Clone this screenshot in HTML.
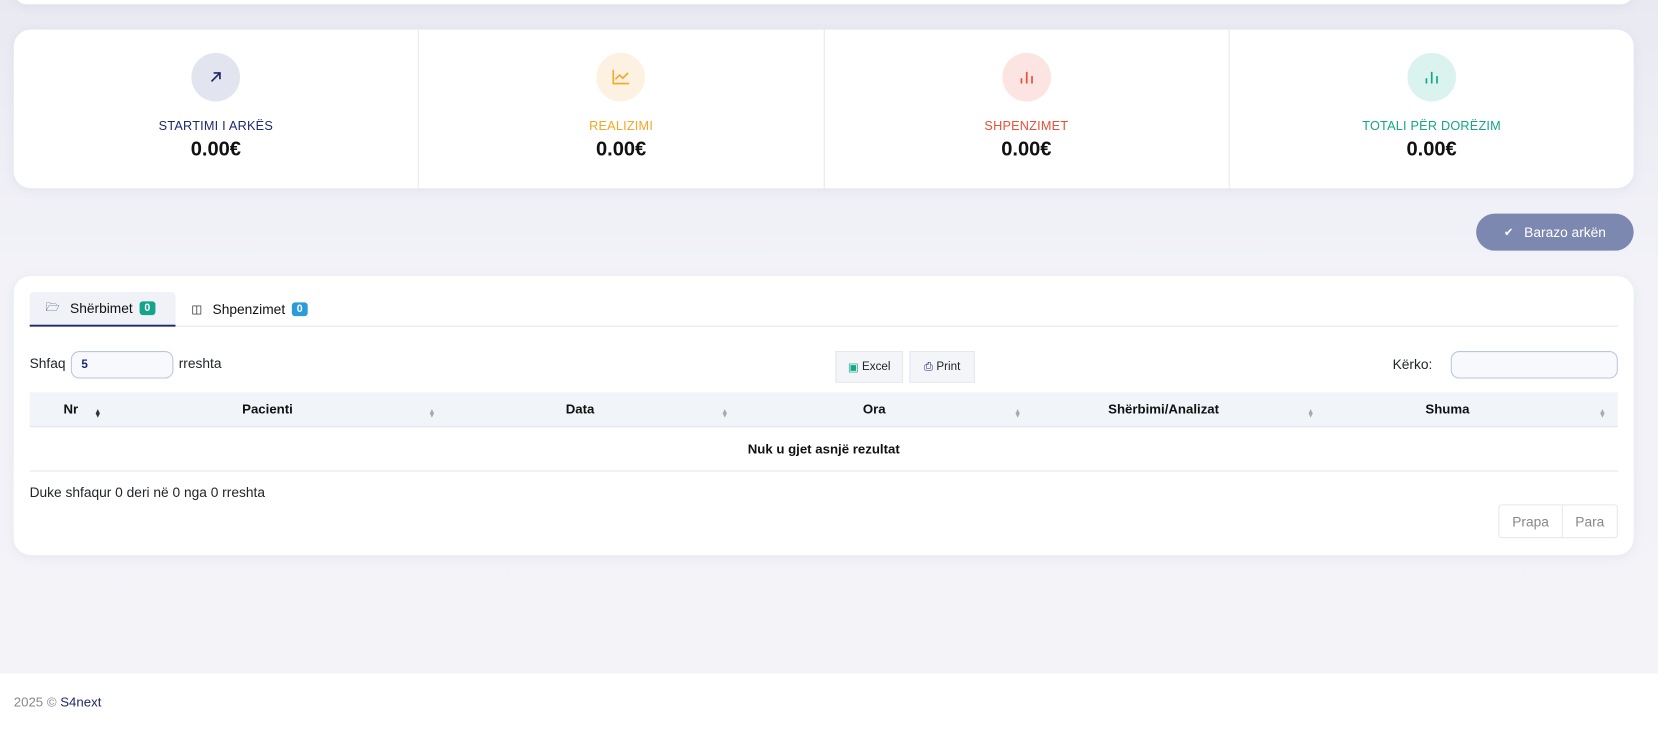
<!DOCTYPE html>
<html><head><meta charset="utf-8"><style>
*{box-sizing:border-box;margin:0;padding:0}
html,body{width:1658px;height:733px;overflow:hidden}
body{background:#f3f3f8;font-family:"Liberation Sans",sans-serif;color:#212529}
#w{position:absolute;left:0;top:0;width:1568px;height:694px;transform:scale(1.05740);transform-origin:0 0;background:linear-gradient(#e9e9f2 0,#f2f2f8 260px,#f3f3f8)}
.card{position:absolute;background:#fff;border-radius:16px;box-shadow:0 2px 10px rgba(100,100,150,.08)}
.top{left:13px;top:-20px;width:1532px;height:24px}
.stats{left:13px;top:28px;width:1532px;height:150px;display:flex}
.stat{flex:1;border-right:1px solid #e6e8ee;text-align:center;padding-top:22px}
.stat:last-child{border:none}
.ic{width:46px;height:46px;border-radius:50%;margin:0 auto;display:flex;align-items:center;justify-content:center}
.lbl{font-size:12px;margin-top:16px;letter-spacing:.2px}
.val{font-size:19px;font-weight:bold;margin-top:5px;color:#111}
.btn{position:absolute;left:1396px;top:202px;width:149px;height:35px;border-radius:18px;background:#7d88b1;color:#fff;font-size:13px;display:flex;align-items:center;justify-content:center;gap:10px}
.main{left:13px;top:261px;width:1532px;height:264px}
.tabs{position:absolute;left:15px;top:15px;width:1502px;height:33px;border-bottom:1px solid #e3e5ea}
.tab{position:absolute;top:0;height:33px;font-size:13px;display:flex;align-items:center;gap:6px;color:#111}
.t1{left:0;width:138px;background:#f0f2f7;border-bottom:2px solid #1d2a6b;padding-left:15px;border-radius:4px 4px 0 0}
.t2{left:153px;padding-left:0}
.badge{color:#fff;font-size:10px;font-weight:bold;padding:1px 5px;border-radius:3px}
.sm{position:absolute;font-size:13px}
.inp{position:absolute;border:1px solid #b9c6e0;border-radius:8px;background:#f8f9fc;height:26px}
.b2{position:absolute;top:71px;height:30px;background:#f3f5f9;border:1px solid #e4e7ee;font-size:11px;display:flex;align-items:center;justify-content:center;gap:3px}
.thead{position:absolute;left:15px;top:110px;width:1502px;height:33px;background:#f1f4f8;border-bottom:1px solid #e3e5ea}
.th{position:absolute;top:9px;font-size:12.5px;font-weight:bold;color:#111}
.so{position:absolute;top:17px;font-size:7px;color:#aaa;line-height:4px}
.foot{position:absolute;left:0;top:637px;width:1568px;height:60px;background:#fff}
</style></head><body><div id="w">
<div class="card top"></div>
<div class="card stats">
 <div class="stat"><div class="ic" style="background:#e2e5ef"><svg width="14" height="14" viewBox="0 0 14 14"><path d="M3 11L11 3M5 3h6v6" stroke="#1d2a6b" stroke-width="1.6" fill="none"/></svg></div><div class="lbl" style="color:#1d2a6b">STARTIMI I ARKËS</div><div class="val">0.00€</div></div>
 <div class="stat"><div class="ic" style="background:#fdf2e2"><svg width="18" height="16" viewBox="0 0 18 16"><path d="M2 1v13h15M4 10l4-4 3 3 5-5" stroke="#f5a623" stroke-width="1.5" fill="none"/></svg></div><div class="lbl" style="color:#f5a623">REALIZIMI</div><div class="val">0.00€</div></div>
 <div class="stat"><div class="ic" style="background:#fbe4e1"><svg width="16" height="16" viewBox="0 0 16 16"><path d="M3 14V9M8 14V3M13 14V7" stroke="#e8503a" stroke-width="1.6"/></svg></div><div class="lbl" style="color:#e8503a">SHPENZIMET</div><div class="val">0.00€</div></div>
 <div class="stat"><div class="ic" style="background:#dbf3ee"><svg width="16" height="16" viewBox="0 0 16 16"><path d="M3 14V9M8 14V3M13 14V7" stroke="#16a689" stroke-width="1.6"/></svg></div><div class="lbl" style="color:#16a689">TOTALI PËR DORËZIM</div><div class="val">0.00€</div></div>
</div>
<div class="btn"><span style="font-size:11px">✔</span>Barazo arkën</div>
<div class="card main">
 <div class="tabs">
  <div class="tab t1"><span style="font-size:11px;color:#1d2a6b">🗁</span>&nbsp;Shërbimet <span class="badge" style="background:#14a38b">0</span></div>
  <div class="tab t2"><span style="font-size:11px">◫</span>&nbsp;Shpenzimet <span class="badge" style="background:#2b9bd9">0</span></div>
 </div>
 <div class="sm" style="left:15px;top:75px">Shfaq</div>
 <div class="inp" style="left:54px;top:71px;width:97px;font-size:11px;font-weight:bold;color:#1d2a6b;padding:6px 9px">5</div>
 <div class="sm" style="left:156px;top:75px">rreshta</div>
 <div class="b2" style="left:777px;width:64px"><span style="color:#16a689">▣</span>Excel</div>
 <div class="b2" style="left:847px;width:62px"><span style="color:#1d2a6b">⎙</span>Print</div>
 <div class="sm" style="left:1304px;top:76px">Kërko:</div>
 <div class="inp" style="left:1359px;top:71px;width:158px"></div>
 <div class="thead">
  <div class="th" style="left:32px">Nr</div><div class="so" style="left:61px;color:#333">▲<br>▼</div>
  <div class="th" style="left:201px">Pacienti</div><div class="so" style="left:377px">▲<br>▼</div>
  <div class="th" style="left:507px">Data</div><div class="so" style="left:654px">▲<br>▼</div>
  <div class="th" style="left:788px">Ora</div><div class="so" style="left:931px">▲<br>▼</div>
  <div class="th" style="left:1020px">Shërbimi/Analizat</div><div class="so" style="left:1208px">▲<br>▼</div>
  <div class="th" style="left:1320px">Shuma</div><div class="so" style="left:1484px">▲<br>▼</div>
 </div>
 <div style="position:absolute;left:15px;top:143px;width:1502px;height:42px;border-bottom:1px solid #e3e5ea;text-align:center;font-size:12.5px;font-weight:bold;padding-top:14px;color:#111">Nuk u gjet asnjë rezultat</div>
 <div class="sm" style="left:15px;top:197px">Duke shfaqur 0 deri në 0 nga 0 rreshta</div>
 <div style="position:absolute;left:1404px;top:216px;width:113px;height:32px;border:1px solid #e4e7ee;border-radius:3px;display:flex;font-size:13px;color:#888">
  <div style="width:60px;border-right:1px solid #e4e7ee;text-align:center;padding-top:8px">Prapa</div><div style="flex:1;text-align:center;padding-top:8px">Para</div></div>
</div>
<div class="foot"><div style="position:absolute;left:13px;top:20px;font-size:12.5px;color:#888">2025 © <span style="color:#1d2a6b">S4next</span></div></div>
</div></body></html>
